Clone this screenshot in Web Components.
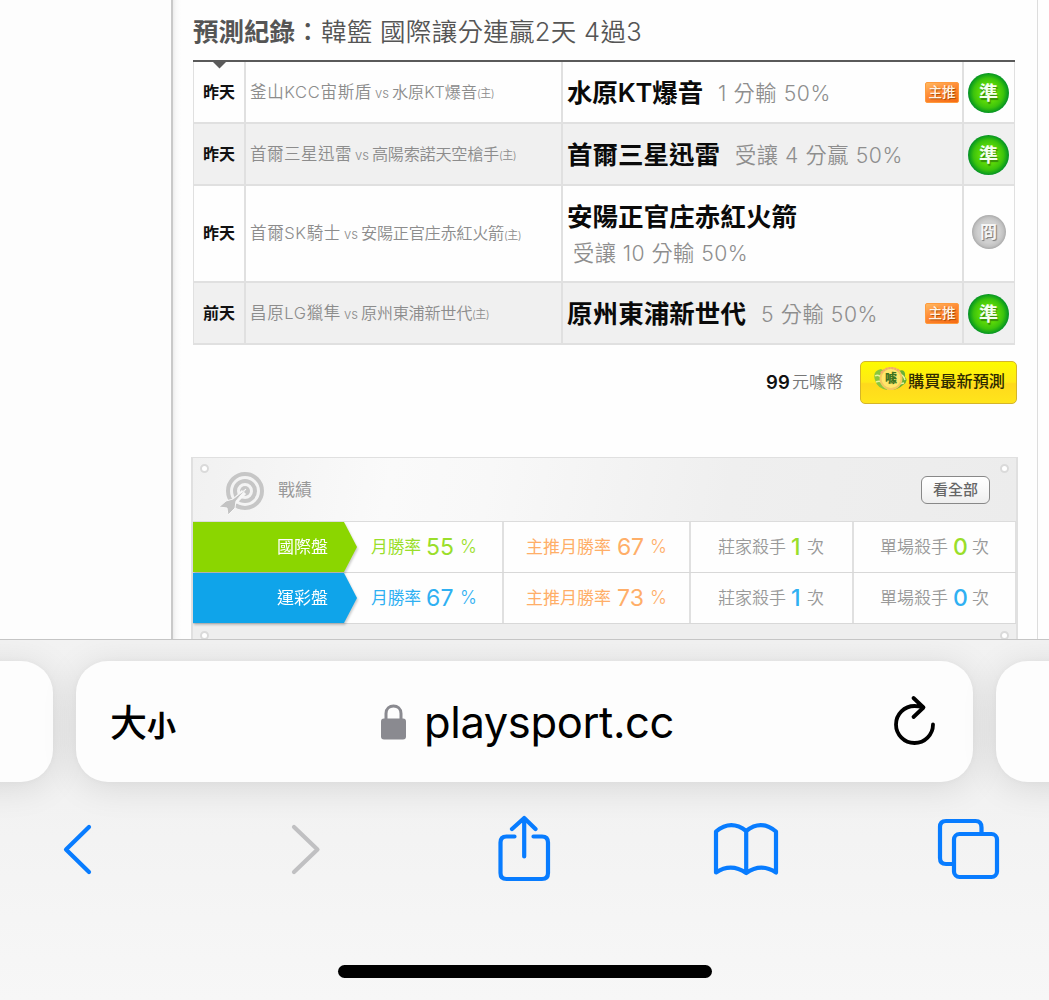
<!DOCTYPE html>
<html lang="zh-Hant">
<head>
<meta charset="utf-8">
<title>playsport.cc</title>
<style>
html,body{margin:0;padding:0}
body{width:1049px;height:1000px;overflow:hidden;background:#fefefe;font-family:Inter,"Noto Sans CJK TC",sans-serif;color:#222}
</style>
</head>
<body>
<phone-screen>
  <prediction-log>
    <fit-text slot="title" w="102" size="25.5" weight="600" color="#555">預測紀錄</fit-text>
    <fit-text slot="title" w="26" size="25.5" weight="500" color="#555">：</fit-text>
    <fit-text slot="title" w="321" size="25.5" weight="350" color="#555">韓籃 國際讓分連贏2天 4過3</fit-text>
    <log-row day="昨天" home="釜山KCC宙斯盾" hw="122" away="水原KT爆音" aw="85" pick="水原KT爆音" pw="136" note="1 分輸 50%" nw="113" gap="15" hot mark="準" first></log-row>
    <log-row day="昨天" home="首爾三星迅雷" hw="102" away="高陽索諾天空槍手" aw="127" pick="首爾三星迅雷" pw="153" note="受讓 4 分贏 50%" nw="168" gap="15" mark="準" odd></log-row>
    <log-row day="昨天" home="首爾SK騎士" hw="91" away="安陽正官庄赤紅火箭" aw="143" pick="安陽正官庄赤紅火箭" pw="230" note="受讓 10 分輸 50%" nw="175" gap="6" mark="冏" tall></log-row>
    <log-row day="前天" home="昌原LG獵隼" hw="91" away="原州東浦新世代" aw="111" pick="原州東浦新世代" pw="179" note="5 分輸 50%" nw="117" gap="15" hot mark="準" odd></log-row>
  </prediction-log>
  <buy-bar></buy-bar>
  <record-panel>
    <record-row label="國際盤" a="55" b="67" c="1" d="0" fill="#8bd600" ink="#9ade2a"></record-row>
    <record-row label="運彩盤" a="67" b="73" c="1" d="0" fill="#0fa4ea" ink="#2fb0f2"></record-row>
  </record-panel>
  <browser-bar slot="bar"></browser-bar>
</phone-screen>

<script>
const make=(tag,html,init)=>customElements.define(tag,class extends HTMLElement{
  connectedCallback(){
    if(this.shadowRoot)return;
    const root=this.attachShadow({mode:'open'});
    root.innerHTML=typeof html==='function'?html(this):html;
    if(init)init(this,root);
  }
});
const at=(el,n)=>el.getAttribute(n);

make('phone-screen',`<style>
:host{display:flex;flex-direction:column;width:1049px;height:1000px;overflow:hidden}
.page{display:flex;height:639px;overflow:hidden;flex:none}
.left{width:171px;background:#fdfdfd;flex:none}
.edge{width:10px;flex:none;background:linear-gradient(90deg,#c9c9c9 0 2px,#ececec 2px,#f8f8f8 5px,#fefefe 10px)}
.mid{width:856px;flex:none;border-right:1px solid #ddd;background:#fefefe}
.right{flex:1;background:#fefefe}
</style><div class="page"><div class="left"></div><div class="edge"></div><div class="mid"><slot></slot></div><div class="right"></div></div><slot name="bar"></slot>`);

make('prediction-log',`<style>
:host{display:block;margin-left:12px;width:822px}
header{display:flex;height:60px;align-items:center;box-sizing:border-box;padding-top:4px}
.rule{height:2px;background:#5a5a5a}
</style><header><slot name="title"></slot></header><div class="rule"></div><slot></slot>`);

make('log-row',el=>{
  const h=el.hasAttribute('tall');
  return `<style>
:host{display:flex;height:${h?97:62}px;box-sizing:border-box;border-bottom:2px solid #e0e0e0;border-left:1px solid #e0e0e0;background:${el.hasAttribute('odd')?'#f0f0f0':'#fefefe'}}
div{box-sizing:border-box;border-right:2px solid #e0e0e0;display:flex;align-items:center}
.day{width:52px;padding-left:9px;position:relative}
.day svg{position:absolute;left:18px;top:0}
.match{width:317px;padding-left:4px}
.pick{width:401px;padding-left:4px;${h?'flex-direction:column;align-items:flex-start;justify-content:center;gap:8px':''}}
.day,.match{padding-top:1px}
.pick{padding-top:${h?1:3}px}
.mark{width:51px;justify-content:center;border-right-width:1px;padding:${h?'0 1px 3px 0':'2px 1px 0 0'};flex:none}
.sp{flex:1}
hot-tag{margin-right:3px;margin-top:-3px}
fit-text{flex:none}
</style>
<div class="day">${el.hasAttribute('first')?'<svg width="14" height="7"><path d="M1 0H14L7.500 6.500Z" fill="#5a5a5a"/></svg>':''}<fit-text w="32" size="16" weight="700" color="#111">${at(el,'day')}</fit-text></div>
<div class="match"><fit-text w="${at(el,'hw')}" size="16.5" weight="350" color="#8c8c8c">${at(el,'home')}</fit-text><fit-text style="margin:2px 3px 0 3px" w="14" size="13" weight="350" color="#8c8c8c">vs</fit-text><fit-text w="${at(el,'aw')}" size="16.200" weight="350" color="#8c8c8c">${at(el,'away')}</fit-text><fit-text style="margin-top:3px" w="17" size="11" weight="350" color="#8c8c8c">(主)</fit-text></div>
<div class="pick"><fit-text w="${at(el,'pw')}" size="25.500" weight="600" color="#0a0a0a">${at(el,'pick')}</fit-text><fit-text style="margin-left:${at(el,'gap')}px;${h?'':'margin-top:1px'}" w="${at(el,'nw')}" size="21.200" weight="350" color="#8e8e8e">${at(el,'note')}</fit-text><span class="sp" ${h?'hidden style="display:none"':''}></span>${el.hasAttribute('hot')?'<hot-tag></hot-tag>':''}</div>
<div class="mark"><result-mark kind="${at(el,'mark')}"></result-mark></div>`});

make('hot-tag',`<style>
:host{display:flex;width:34px;height:21px;box-sizing:border-box;border:1px solid #ff9b3d;border-radius:2px;background:linear-gradient(160deg,#ffb860,#ff8a35 45%,#f56a12);align-items:center;justify-content:center;font-size:13.500px;font-weight:500;line-height:19px;color:#fff4e5;text-shadow:1px 1px 1px #a44a00}
</style>主推`);

make('result-mark',el=>{
  const ok=at(el,'kind')==='準';
  return `<style>
:host{display:flex;box-sizing:border-box;width:${ok?41:34}px;height:${ok?40:34}px;border-radius:50%;align-items:center;justify-content:center;line-height:1;
${ok?'background:radial-gradient(circle,#5bd808 0 32%,#3cc40c 52%,#10a01c 66%,#07902b 71%);color:#f4fff0;font-size:19px;font-weight:700;text-shadow:1px 2px 1px #226a08aa':'background:radial-gradient(circle,#d0d0d0 0 45%,#c2c2c2 60%,#acacac 70%);color:#f5f5f5;font-size:17px;font-weight:700;text-shadow:1px 1px 1px #777'}}
</style>${at(el,'kind')}`});

make('buy-bar',`<style>
:host{display:flex;justify-content:flex-end;align-items:center;height:42px;margin:16px 20px 0 0}
.btn{display:flex;align-items:center;box-sizing:border-box;width:157px;height:43px;margin-left:17px;padding-left:12px;border:1px solid #d5b52a;border-radius:5px;background:linear-gradient(#fdfb00,#ffe916 49%,#ffd91c 53%,#ffe51b)}
svg{margin:-6px 1px 0 0;flex:none}
</style><fit-text w="24" size="18.500" weight="600" color="#111">99</fit-text><fit-text style="margin-left:2px" w="51" size="17" weight="350" color="#777">元噱幣</fit-text>
<div class="btn"><svg width="34" height="28" viewBox="0 0 34 28"><path d="M8 4Q-1 6 2 15Q4 23 14 25L11 6Z" fill="#8ac63e"/><path d="M25 6Q33 3 32 12Q36 16 30 20Q25 25 17 25Z" fill="#69af35"/><path d="M2 11Q5 9 8 12M3 17Q7 15 10 18M26 9Q31 10 32 15M26 19L31 18" stroke="#e7f5a0" stroke-width="1.500" fill="none"/><circle cx="18" cy="13.500" r="10.500" fill="#ffe66a" stroke="#f5c85f" stroke-width="2"/><path d="M8 8Q15-1 27 6" stroke="#f2a66d" stroke-width="2" fill="none" stroke-dasharray="2 1"/><text x="18" y="18" text-anchor="middle" font-size="12" font-weight="800" fill="#3e731f">噱</text></svg><fit-text w="97" size="16.200" weight="500" color="#2e2a00">購買最新預測</fit-text></div>`);

make('record-panel',`<style>
:host{display:block;width:827px;height:200px;box-sizing:border-box;margin:54px 0 0 10px;border:2px solid #e0e0e0;border-top-width:1px;background:#eee}
header{display:flex;align-items:center;height:64px;box-sizing:border-box;border-bottom:1px solid #dcdcdc;position:relative;background:linear-gradient(100deg,#f1f1f1 0,#fafafa 24%,#f8f8f8 36%,#efefef 65%,#ececec)}
.dot{position:absolute;box-sizing:border-box;width:9px;height:9px;border:2px solid #dadada;border-radius:50%;background:#fff}
.all{margin-left:auto;margin-right:26px;margin-top:0;width:69px;height:28px;box-sizing:border-box;border:1.500px solid #888;border-radius:6px;background:linear-gradient(#fff,#f8f8f8 50%,#eee);display:flex;align-items:center;justify-content:center}
svg{margin:9px 10px 0 25px}
header>fit-text{margin-top:1px}
footer{position:relative;height:20px}
</style><header><i class="dot" style="left:7px;top:6px"></i><i class="dot" style="right:7px;top:6px"></i>
<svg width="50" height="46" viewBox="0 0 50 46"><g fill="none" stroke="#c6c6c6" stroke-width="4"><circle cx="27" cy="20" r="17"/><circle cx="27" cy="20" r="10"/></g><circle cx="27" cy="20" r="5" fill="#c6c6c6"/><path d="M26 21L13 34" stroke="#f7f7f7" stroke-width="6"/><path d="M28 18L18 30L17 37L10 44L9 37L1 36L8 30L15 28Z" fill="#c3c3c3" stroke="#f7f7f7" stroke-width="1"/></svg>
<fit-text w="34" size="17" weight="400" color="#999">戰績</fit-text><span class="all"><fit-text w="45" size="15" weight="500" color="#666">看全部</fit-text></span></header><slot></slot><footer><i class="dot" style="left:7px;top:7px"></i><i class="dot" style="right:7px;top:7px"></i></footer>`);

make('record-row',el=>{
  const t=(txt,w,s,c,m=0,y=0,k=350)=>`<fit-text style="margin-left:${m}px;margin-top:${y}px" w="${w}" size="${s}" weight="${k}" color="${c}">${txt}</fit-text>`;
  const ink=at(el,'ink'),o='#ffae68',g='#999';
  return `<style>
:host{display:flex;height:51px;background:#fefefe;box-sizing:border-box;border-bottom:1px solid #d8d8d8}
div{display:flex;align-items:center;box-sizing:border-box;border-right:2px solid #e0e0e0}
.first{width:311px;border-right-color:#e0e0e0}
.arrow{position:relative;width:164px;height:50px;flex:none;filter:drop-shadow(1px 2px 1px #0003)}
.shape{display:flex;align-items:center;box-sizing:border-box;height:50px;padding-left:84px;clip-path:polygon(0 0,151px 0,164px 50%,151px 100%,0 100%);background:${at(el,'fill')};border:0}
fit-text{flex:none}
</style>
<div class="first"><span class="arrow"><div class="shape">${t(at(el,'label'),51,17,'#fff',0,0,400)}</div></span>${t('月勝率',50,16.800,ink,14,0,400)}${t(at(el,'a'),28,23,ink,5,2,400)}${t('%',16,18,ink,6)}</div>
<div style="width:187px">${t('主推月勝率',85,17,o,22,0,400)}${t(at(el,'b'),27,23,o,6,2,400)}${t('%',16,18,o,6)}</div>
<div style="width:163px">${t('莊家殺手',68,17,g,27)}${t(at(el,'c'),10,23,ink,5,2,500)}${t('次',17,17,g,6)}</div>
<div style="width:162px;border-right-width:1px">${t('單場殺手',68,17,g,26)}${t(at(el,'d'),14,23,ink,5,2,500)}${t('次',17,17,g,5)}</div>`});

make('browser-bar',`<style>
:host{display:flex;flex-direction:column;height:361px;flex:none;box-sizing:border-box;border-top:1px solid #c5c5c5;background:linear-gradient(#f2f2f2,#f0f0f0 25%,#f3f3f3 55%,#f7f7f7);overflow:hidden}
.tabs{display:flex;gap:23px;margin:21px 0 0 -147px;width:1400px;height:121px;flex:none}
.card{width:200px;height:121px;border-radius:32px;background:#fdfdfd;box-shadow:0 5px 36px #0000001c,0 0 6px #00000008;box-sizing:border-box;flex:none}
.main{width:897px;display:flex;align-items:center;padding:2px 38px 0 34px}
.size{display:flex;align-items:baseline;margin-top:3px}
.addr{display:flex;align-items:center;gap:17px;margin-left:203px}
.addr svg{margin-top:-2px}
.reload{margin:-5px 0 0 auto}
.tools{display:flex;margin:29px 0 0 60px;height:76px;align-items:center;flex:none}
.home{width:374px;height:13px;border-radius:7px;background:#000;margin:78px auto 0;flex:none}
svg{display:block;overflow:visible;flex:none}
.tools svg{fill:none;stroke:#087cff;stroke-width:4.200;stroke-linecap:round;stroke-linejoin:round}
</style>
<div class="tabs"><div class="card"></div><div class="card main">
<span class="size"><fit-text w="37" size="37" weight="500" color="#000">大</fit-text><fit-text w="30" size="29" weight="700" color="#000">小</fit-text></span>
<span class="addr"><svg width="27" height="36" viewBox="0 0 27 36"><path d="M5.500 17V9.500C5.500-.5 20.500-.5 20.500 9.500V17" transform="translate(.5 0)" fill="none" stroke="#8a8a90" stroke-width="3"/><rect x="1" y="14.500" width="25" height="21" rx="3" fill="#8a8a90"/></svg><fit-text w="250" size="43.500" weight="400" color="#000">playsport.cc</fit-text></span>
<svg class="reload" width="41" height="50" viewBox="0 0 41 50" fill="none" stroke="#000" stroke-width="3.800" stroke-linecap="round" stroke-linejoin="round"><path d="M39 29.500A18.500 18.500 0 1 1 20.500 11Q25 11 29 12.500M19.500 3L29.500 12.500L19.500 22"/></svg>
</div><div class="card"></div></div>
<div class="tools">
<svg width="32" height="50" viewBox="60 824 32 50"><path d="M89 827L66 849.500L89 872"/></svg>
<svg width="32" height="50" viewBox="289 824 32 50" style="stroke:#c0c0c2;margin-left:196.500px"><path d="M294 827L317.500 849.500L294 872"/></svg>
<svg width="52" height="68" viewBox="498.500 814.500 52 68" style="margin-left:177.500px"><path d="M515 836H507Q501 836 501 842V872.500Q501 878.500 507 878.500H542.500Q548.500 878.500 548.500 872.500V842Q548.500 836 542.500 836H534M524.700 856V818M512.500 828.500L524.700 817.500L536 828.500"/></svg>
<svg width="64" height="56" viewBox="714 821 64 56" style="margin-left:164px"><path d="M746.200 873V831Q731 819 716 831.500V872.500Q731 862.500 746.200 873Q761 862.500 776 872.500V831.500Q761 819 746.200 831"/></svg>
<svg width="62" height="60" viewBox="937.500 819.500 62 60" style="margin-left:159.500px"><path d="M981 833V828Q981 821.500 975 821.500H945.500Q939.500 821.500 939.500 827.500V858.500Q939.500 864.500 945.500 864.500H952"/><rect x="953.500" y="834.500" width="43" height="43" rx="5.500"/></svg>
</div><div class="home"></div>`);

/* Sets a run of text at a given advance width by adjusting its tracking. */
make('fit-text',el=>`<style>
:host{display:inline-block;white-space:pre;line-height:1.2;font-size:${at(el,'size')}px;font-weight:${at(el,'weight')};color:${at(el,'color')}}
span{display:inline-block}
</style><span><slot></slot></span>`,(el,root)=>{
  const s=root.querySelector('span'),n=[...el.textContent].length,w=+at(el,'w');
  const ls=(w-s.getBoundingClientRect().width)/Math.max(1,n);
  if(n>1)s.style.letterSpacing=ls+'px';
  el.style.width=w+'px';
});
</script>
</body>
</html>
